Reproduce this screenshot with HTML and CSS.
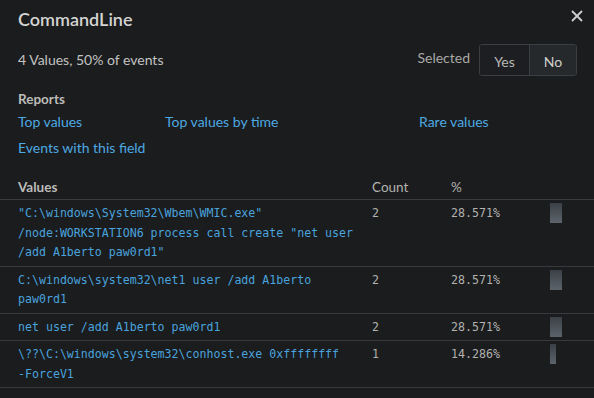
FILE: index.html
```html
<!DOCTYPE html>
<html>
<head>
<meta charset="utf-8">
<link rel="stylesheet" href="styles.css">
</head>
<body>
<div class="panel">
  <div class="head">
    <h1 class="title">CommandLine</h1>
    <button class="close" aria-label="Close">
      <svg width="12" height="12" viewBox="0 0 12 12"><path d="M1 1 L11 11 M11 1 L1 11" stroke="#cfcfcf" stroke-width="1.8" fill="none"/></svg>
    </button>
  </div>
  <div class="summary">
    <span class="count-text">4 Values, 50% of events</span>
    <div class="selected">
      <span class="sel-label">Selected</span>
      <div class="toggle">
        <span class="opt">Yes</span>
        <span class="opt active">No</span>
      </div>
    </div>
  </div>
  <div class="reports">
    <div class="section-title">Reports</div>
    <div class="links">
      <a class="link">Top values</a>
      <a class="link">Top values by time</a>
      <a class="link">Rare values</a>
      <a class="link">Events with this field</a>
    </div>
  </div>
  <div class="table">
    <div class="row header">
      <div class="c-val">Values</div>
      <div class="c-cnt">Count</div>
      <div class="c-pct">%</div>
      <div></div>
    </div>
    <div class="row">
      <div class="c-val mono">"C:\windows\System32\Wbem\WMIC.exe" /node:WORKSTATION6 process call create "net user /add A1berto paw0rd1"</div>
      <div class="c-cnt num">2</div>
      <div class="c-pct num">28.571%</div>
      <div class="c-bar"><span class="bar" style="width:12px"></span></div>
    </div>
    <div class="row">
      <div class="c-val mono">C:\windows\system32\net1 user /add A1berto paw0rd1</div>
      <div class="c-cnt num">2</div>
      <div class="c-pct num">28.571%</div>
      <div class="c-bar"><span class="bar" style="width:12px"></span></div>
    </div>
    <div class="row">
      <div class="c-val mono">net user /add A1berto paw0rd1</div>
      <div class="c-cnt num">2</div>
      <div class="c-pct num">28.571%</div>
      <div class="c-bar"><span class="bar" style="width:12px"></span></div>
    </div>
    <div class="row">
      <div class="c-val mono">\??\C:\windows\system32\conhost.exe 0xffffffff <span class="nowrap">-ForceV1</span></div>
      <div class="c-cnt num">1</div>
      <div class="c-pct num">14.286%</div>
      <div class="c-bar"><span class="bar" style="width:6px"></span></div>
    </div>
  </div>
</div>
</body>
</html>
```
FILE: styles.css
```css
* { box-sizing: border-box; }
html, body {
  margin: 0;
  padding: 0;
  background: #1a1c1e;
  width: 594px;
  height: 398px;
  overflow: hidden;
}
body {
  font-family: Lato, "Open Sans", sans-serif;
  color: #c3c3c1;
  font-size: 14px;
}
.panel {
  display: flex;
  flex-direction: column;
}
.head {
  display: flex;
  justify-content: space-between;
  align-items: flex-start;
  padding: 8px 11px 0 18px;
  height: 38px;
}
.title {
  margin: 0;
  font-size: 18px;
  font-weight: 600;
  line-height: 22px;
  color: #d4d4d2;
}
.close {
  background: none;
  border: 0;
  padding: 0;
  margin-top: 2px;
  width: 12px;
  height: 12px;
  display: flex;
}
.summary {
  display: flex;
  justify-content: space-between;
  align-items: center;
  padding: 0 17px 0 18px;
  height: 40px;
  margin-top: 2px;
}
.count-text {
  font-size: 14px;
  color: #c3c3c1;
  margin-bottom: 2px;
}
.selected {
  display: flex;
  align-items: center;
  gap: 9px;
}
.sel-label {
  color: #aaa9a6;
  font-size: 14px;
  margin-bottom: 5px;
}
.toggle {
  display: flex;
  border: 1px solid #3b3e42;
  border-radius: 3px;
  height: 32px;
  overflow: hidden;
}
.opt {
  display: flex;
  align-items: center;
  justify-content: center;
  font-size: 14px;
  color: #b9b8b5;
  padding-top: 2px;
}
.opt:first-child {
  width: 50px;
  border-right: 1px solid #3b3e42;
  background: #1c1e21;
}
.opt.active {
  width: 46px;
  background: #26292c;
  color: #d0d0ce;
}
.reports {
  padding: 10px 18px 0 18px;
}
.section-title {
  font-weight: 700;
  font-size: 13.5px;
  color: #bdbcb9;
  line-height: 18px;
}
.links {
  display: grid;
  grid-template-columns: 147px 254px 1fr;
  row-gap: 8px;
  margin-top: 5px;
}
.link {
  color: #4ea9e2;
  font-size: 14px;
  line-height: 18px;
  cursor: pointer;
}
.table {
  margin-top: 21px;
}
.row {
  display: grid;
  grid-template-columns: 354px 79px 99px 1fr;
  padding: 4px 0 3px 18px;
  border-bottom: 1px solid #37393d;
  line-height: 19.5px;
}
.row.header {
  padding: 0 0 3px 18px;
  border-bottom: 1px solid #3a3c40;
  line-height: 18px;
  font-size: 13.5px;
}
.row.header .c-val {
  font-weight: 700;
  color: #bdbcb9;
}
.row.header .c-cnt, .row.header .c-pct {
  color: #b3b2af;
}
.mono {
  font-family: "DejaVu Sans Mono", monospace;
  font-size: 11.6px;
  color: #4aa3dd;
  padding-right: 12px;
}
.nowrap {
  white-space: nowrap;
}
.num {
  font-family: "DejaVu Sans Mono", monospace;
  font-size: 11.6px;
  color: #b3b2af;
}
.bar {
  display: block;
  height: 20px;
  margin-top: -1px;
  background: linear-gradient(to bottom, #3b4047, #5c636a);
}
```
